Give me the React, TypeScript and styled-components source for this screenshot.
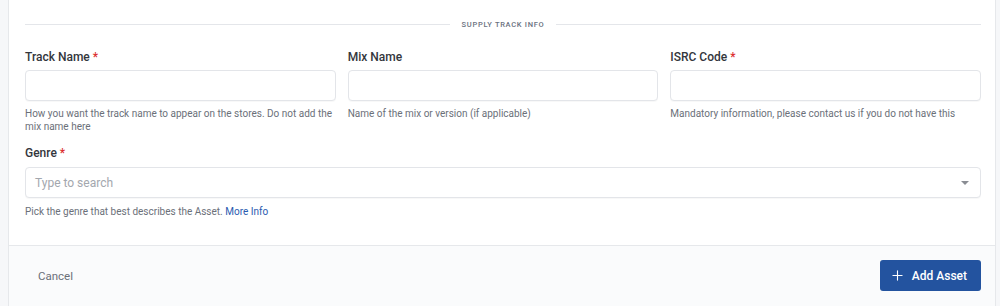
import { FC } from 'react';
import styled, { createGlobalStyle } from 'styled-components';

const GlobalStyle = createGlobalStyle`
  html, body {
    margin: 0;
    padding: 0;
    background: #f6f7f9;
    font-family: Roboto, 'Noto Sans', sans-serif;
  }
`;

const PageWrapper = styled.div`
  width: 1000px;
  height: 306px;
  padding-left: 8px;
  padding-right: 4px;
  box-sizing: border-box;
  background: #f6f7f9;
  overflow: hidden;
`;

const Card = styled.div`
  background: #ffffff;
  border-left: 1px solid #e6e8eb;
  border-right: 1px solid #e6e8eb;
  height: 100%;
  display: flex;
  flex-direction: column;
`;

const Body = styled.div`
  padding: 16px 14px 27px 16px;
  border-bottom: 1px solid #e6e8eb;
`;

const Divider = styled.div`
  display: flex;
  align-items: center;
  gap: 12px;
  height: 16px;

  &::before,
  &::after {
    content: '';
    flex: 1;
    height: 1px;
    background: #e4e6ea;
  }
`;

const DividerText = styled.span`
  font-size: 7.5px;
  font-weight: 500;
  letter-spacing: 0.7px;
  color: #6b7280;
  text-transform: uppercase;
`;

const FieldGrid = styled.div`
  display: grid;
  grid-template-columns: repeat(3, 1fr);
  column-gap: 12px;
  margin-top: 17px;
`;

const Field = styled.div<{ $wide?: boolean }>`
  display: flex;
  flex-direction: column;
  grid-column: ${(p) => (p.$wide ? '1 / -1' : 'auto')};
  margin-top: ${(p) => (p.$wide ? '12px' : '0')};
`;

const Label = styled.label<{ $gap?: number }>`
  font-size: 12px;
  line-height: 16px;
  font-weight: 500;
  color: #33363c;
  margin-bottom: ${(p) => p.$gap ?? 5}px;
`;

const Required = styled.span`
  color: #dc2f2f;
  margin-left: 3px;
`;

const TextInput = styled.input`
  box-sizing: border-box;
  height: 31px;
  width: 100%;
  border: 1px solid #e3e5e9;
  border-radius: 4px;
  background: #fff;
  box-shadow: 0 1px 1px rgba(0, 0, 0, 0.03);
  padding: 0 9px;
  font-family: inherit;
  font-size: 12px;
  outline: none;
`;

const SelectBox = styled.div`
  box-sizing: border-box;
  height: 31px;
  border: 1px solid #e3e5e9;
  border-radius: 4px;
  background: #fff;
  box-shadow: 0 1px 1px rgba(0, 0, 0, 0.03);
  display: flex;
  align-items: center;
  justify-content: space-between;
  padding: 0 11px 0 9px;
`;

const Placeholder = styled.span`
  font-size: 12px;
  color: #a3a7ae;
`;

const Caret = styled.span`
  width: 0;
  height: 0;
  border-left: 4px solid transparent;
  border-right: 4px solid transparent;
  border-top: 4px solid #8a8d93;
`;

const Help = styled.div<{ $top?: number }>`
  font-size: 10px;
  line-height: 13px;
  color: #6b7079;
  margin-top: ${(p) => p.$top ?? 6}px;
`;

const InfoLink = styled.a`
  color: #2a5bb0;
  text-decoration: none;
`;

const Footer = styled.div`
  flex: 1;
  background: #fafbfc;
  display: flex;
  justify-content: space-between;
  align-items: flex-start;
  padding: 14px 14px 0 16px;
`;

const CancelButton = styled.button`
  height: 31px;
  border: none;
  background: transparent;
  padding: 0 13px;
  font-family: inherit;
  font-size: 11.5px;
  color: #6b7079;
`;

const PrimaryButton = styled.button`
  height: 31px;
  display: flex;
  align-items: center;
  gap: 9px;
  padding: 0 14px 0 12px;
  border: none;
  border-radius: 3px;
  background: #23539f;
  color: #fff;
  font-family: inherit;
  font-size: 12px;
  font-weight: 500;
`;

const PlusIcon: FC = () => (
  <svg width="11" height="11" viewBox="0 0 12 12" fill="none">
    <path d="M6 1v10M1 6h10" stroke="#fff" strokeWidth="1.2" strokeLinecap="round" />
  </svg>
);

export default function App() {
  return (
    <PageWrapper>
      <GlobalStyle />
      <Card>
        <Body>
          <Divider>
            <DividerText>Supply Track Info</DividerText>
          </Divider>
          <FieldGrid>
            <Field>
              <Label>
                Track Name<Required>*</Required>
              </Label>
              <TextInput />
              <Help>How you want the track name to appear on the stores. Do not add the mix name here</Help>
            </Field>
            <Field>
              <Label>Mix Name</Label>
              <TextInput />
              <Help>Name of the mix or version (if applicable)</Help>
            </Field>
            <Field>
              <Label>
                ISRC Code<Required>*</Required>
              </Label>
              <TextInput />
              <Help>Mandatory information, please contact us if you do not have this</Help>
            </Field>
            <Field $wide>
              <Label $gap={6}>
                Genre<Required>*</Required>
              </Label>
              <SelectBox>
                <Placeholder>Type to search</Placeholder>
                <Caret />
              </SelectBox>
              <Help $top={7}>
                Pick the genre that best describes the Asset. <InfoLink href="#">More Info</InfoLink>
              </Help>
            </Field>
          </FieldGrid>
        </Body>
        <Footer>
          <CancelButton>Cancel</CancelButton>
          <PrimaryButton>
            <PlusIcon />
            Add Asset
          </PrimaryButton>
        </Footer>
      </Card>
    </PageWrapper>
  );
}
